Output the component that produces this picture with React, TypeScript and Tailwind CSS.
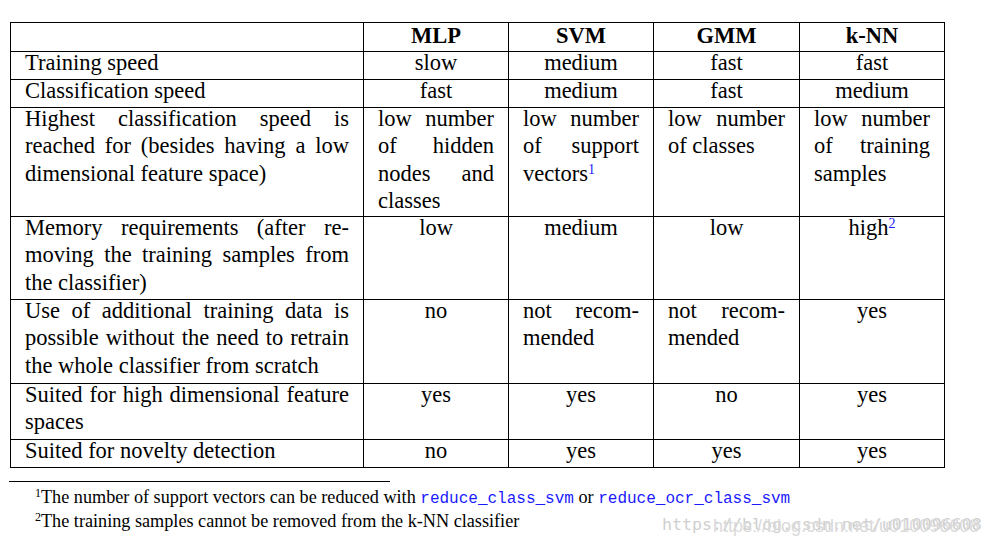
const HEADERS = ['MLP', 'SVM', 'GMM', 'k-NN'];

type Cell = string | { lines: string[]; sup?: string } | { text: string; sup: string };

type Row = { label: string[]; cells: Cell[] };

const ROWS: Row[] = [
  { label: ['Training speed'], cells: ['slow', 'medium', 'fast', 'fast'] },
  { label: ['Classification speed'], cells: ['fast', 'medium', 'fast', 'medium'] },
  {
    label: ['Highest classification speed is', 'reached for (besides having a low', 'dimensional feature space)'],
    cells: [
      { lines: ['low number', 'of hidden', 'nodes and', 'classes'] },
      { lines: ['low number', 'of support', 'vectors'], sup: '1' },
      { lines: ['low number', 'of classes'] },
      { lines: ['low number', 'of training', 'samples'] },
    ],
  },
  {
    label: ['Memory requirements (after re-', 'moving the training samples from', 'the classifier)'],
    cells: ['low', 'medium', 'low', { text: 'high', sup: '2' }],
  },
  {
    label: ['Use of additional training data is', 'possible without the need to retrain', 'the whole classifier from scratch'],
    cells: ['no', { lines: ['not recom-', 'mended'] }, { lines: ['not recom-', 'mended'] }, 'yes'],
  },
  { label: ['Suited for high dimensional feature', 'spaces'], cells: ['yes', 'yes', 'no', 'yes'] },
  { label: ['Suited for novelty detection'], cells: ['no', 'yes', 'yes', 'yes'] },
];

function Lines({ lines, sup }: { lines: string[]; sup?: string }) {
  return (
    <>
      {lines.map((line, i) => {
        const last = i === lines.length - 1;
        return (
          <div key={i} className={last ? 'text-left' : 'text-justify [text-align-last:justify]'}>
            {line}
            {last && sup && <sup className="text-[14px] text-[#1a1aff]">{sup}</sup>}
          </div>
        );
      })}
    </>
  );
}

function BodyCell({ cell }: { cell: Cell }) {
  if (typeof cell === 'string') {
    return <div className="text-center">{cell}</div>;
  }
  if ('text' in cell) {
    return (
      <div className="text-center">
        {cell.text}
        <sup className="text-[14px] text-[#1a1aff]">{cell.sup}</sup>
      </div>
    );
  }
  return <Lines lines={cell.lines} sup={cell.sup} />;
}

export default function App() {
  return (
    <div className="relative w-[993px] h-[547px] overflow-hidden bg-white text-black font-['Liberation_Serif',serif]">
      <div className="pl-[10px] pt-[22px]">
        <div className="grid w-fit grid-cols-[353px_145px_145px_146px_145px] grid-rows-[29px_28px_28px_109px_83px_84px_56px_28px] border-l border-t border-black text-[22.5px] leading-[27.3px]">
          {/* header */}
          <div className="border-r border-b border-black" />
          {HEADERS.map(h => (
            <div key={h} className="border-r border-b border-black px-[14px]">
              <div className="-mt-[1px] text-center font-bold">{h}</div>
            </div>
          ))}

          {ROWS.map((row, r) => (
            <div key={r} className="contents">
              <div className="border-r border-b border-black px-[14px]">
                <div className="-mt-[3px]">
                  <Lines lines={row.label} />
                </div>
              </div>
              {row.cells.map((cell, c) => (
                <div key={c} className="border-r border-b border-black px-[14px]">
                  <div className="-mt-[3px]">
                    <BodyCell cell={cell} />
                  </div>
                </div>
              ))}
            </div>
          ))}
        </div>
      </div>

      {/* footnotes */}
      <div className="mt-[13px] ml-[9px] h-px w-[381px] bg-black" />
      <div className="mt-[4px] pl-[35px] text-[18.2px] leading-[22px]">
        <div>
          <sup className="text-[12px]">1</sup>The number of support vectors can be reduced with{' '}
          <span className="font-['Liberation_Mono',monospace] text-[16px] text-[#1a1aff]">reduce_class_svm</span> or{' '}
          <span className="font-['Liberation_Mono',monospace] text-[16px] text-[#1a1aff]">reduce_ocr_class_svm</span>
        </div>
        <div>
          <sup className="text-[12px]">2</sup>The training samples cannot be removed from the k-NN classifier
        </div>
      </div>

      {/* csdn watermark */}
      <div className="absolute left-[662px] top-[514px] whitespace-nowrap font-['DejaVu_Sans_Mono',monospace] text-[16.6px] leading-[22px] text-[#cfcfcf]">
        https://blog.csdn.net/u010096608
      </div>
      <div className="absolute left-[713px] top-[515px] whitespace-nowrap font-['Liberation_Sans',sans-serif] text-[18px] leading-[22px] text-[#dadada]">
        https://blog.csdn.net/u010096608
      </div>
    </div>
  );
}
